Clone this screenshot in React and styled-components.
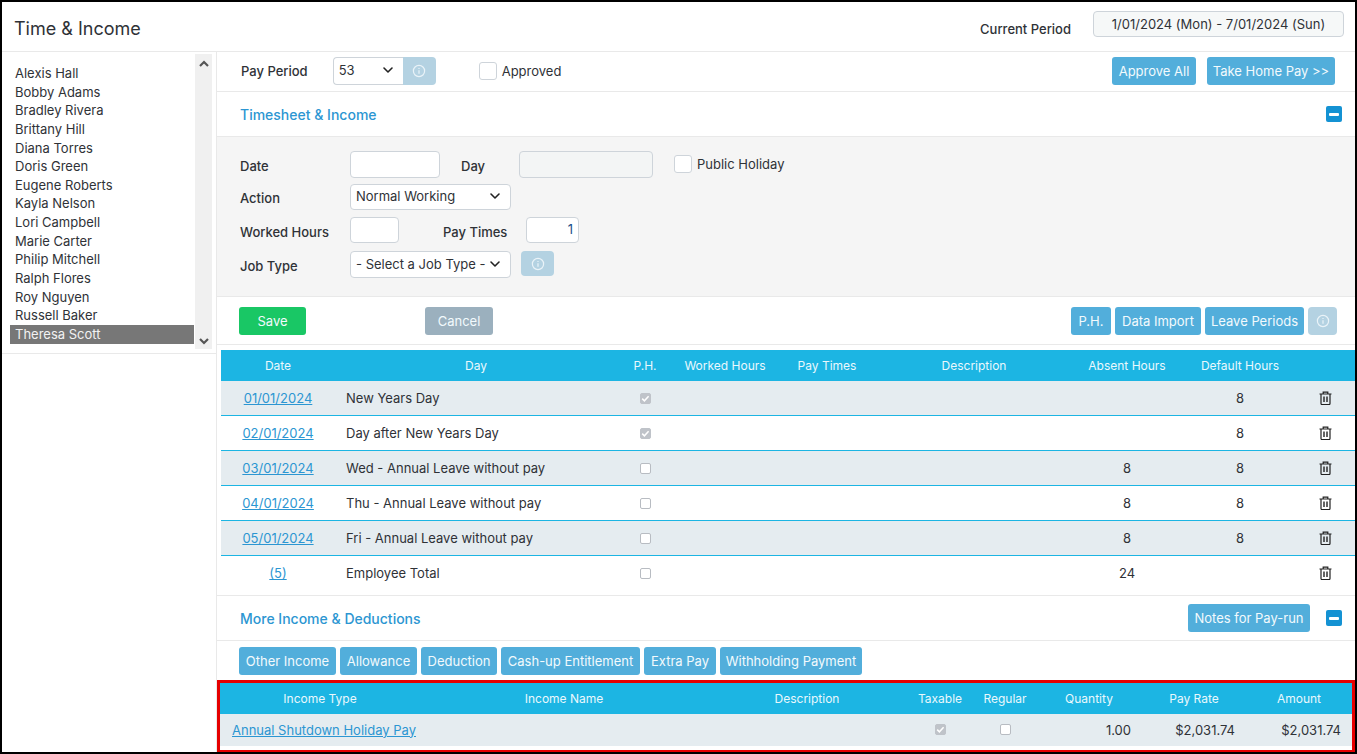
import React from 'react';
import styled, { createGlobalStyle } from 'styled-components';

const Global = createGlobalStyle`
  html, body { margin: 0; padding: 0; background: #000; }
  body { font-family: Inter, "Liberation Sans", sans-serif; font-size: 13px; color: #2f3237; }
  * { box-sizing: border-box; }
`;

const Page = styled.div`
  width: 1357px; height: 754px; overflow: hidden;
  background: #fff;
  border: 2px solid #000; border-bottom-width: 2px; border-right-width: 2px;
  display: flex; flex-direction: column;
`;
const TopBar = styled.header`
  height: 50px; flex: none; display: flex; align-items: center;
  border-bottom: 1px solid #e9e9e9;
  padding: 0 11px 0 12px;
`;
const Title = styled.h1`
  margin: 0; font-size: 18px; font-weight: 400; color: #2f3237; line-height: 22px; margin-top: 4px; flex: 1;
`;
const PeriodLabel = styled.span`
  font-size: 13px; font-weight: 500; margin-right: 22px; margin-top: 4px;
`;
const PeriodBox = styled.div`
  width: 251px; height: 26px; border: 1px solid #ced4da; border-radius: 4px;
  background: #f6f8f8; text-align: center; line-height: 24px; font-size: 13px;
  margin-top: -5px;
`;
const Body = styled.div`flex: 1; display: flex; min-height: 0;`;
const Sidebar = styled.aside`
  width: 215px; flex: none; border-right: 1px solid #e9e9e9;
`;
const ListWrap = styled.div`
  height: 302px; border-bottom: 1px solid #e9e9e9; padding: 2px 4px 0 8px; display: flex;
`;
const List = styled.ul`
  list-style: none; margin: 0; padding: 10px 0 0; width: 184px;
`;
const Person = styled.li`
  height: 18.65px; line-height: 18.65px; padding-left: 5px; font-size: 13px;
  background: ${p => (p.$on ? '#777' : 'transparent')};
  color: ${p => (p.$on ? '#f2f2f2' : '#2f3237')};
`;
const Scroll = styled.div`
  width: 17px; margin-left: 1px; background: #f0f0f0; display: flex; flex-direction: column;
  justify-content: space-between; align-items: center; padding: 5px 0 3px; height: 295px;
`;
const Main = styled.main`flex: 1; min-width: 0; display: flex; flex-direction: column;`;
const PayBar = styled.div`
  height: 40px; flex: none; display: flex; align-items: center;
  border-bottom: 1px solid #e9e9e9; padding: 0 20px 2px 24px;
`;
const Label = styled.span`font-size: 13px; font-weight: ${p => p.$w || 500};`;
const SelectGroup = styled.div`display: flex; margin-left: 25px;`;
const SelectBox = styled.div`
  width: ${p => p.$w}px; height: ${p => p.$h || 28}px; background: #fff; border: 1px solid #ced4da;
  border-radius: ${p => (p.$joined ? '4px 0 0 4px' : '4px')};
  display: flex; align-items: center; justify-content: space-between;
  padding: 0 9px 2px 5px; font-size: 13px; line-height: 16px;
  ${p => p.$joined && 'border-right: none;'}
`;
const InfoBtn = styled.div`
  width: ${p => p.$w || 33}px; height: ${p => p.$h || 28}px; background: #b4d2e2; display: flex; align-items: center; justify-content: center;
  border-radius: ${p => (p.$joined ? '0 4px 4px 0' : '4px')};
`;
const Check = styled.span`
  width: 18px; height: 18px; border: 1px solid #ced4da; border-radius: 3px; background: #fff; display: inline-block; flex: none;
`;
const ApprovedWrap = styled.div`display: flex; align-items: center; gap: 5px; margin-left: 43px; flex: 1; font-size: 13px;`;
const Btn = styled.button`
  height: 28px; border: none; border-radius: 3px; background: ${p => p.$bg || '#52aedb'}; color: ${p => p.$c || '#f2fafd'};
  font-family: inherit; font-size: 13px; padding: 0; width: ${p => p.$w}px; flex: none; line-height: 26px;
`;
const ButtonRow = styled.div`display: flex; gap: ${p => p.$gap || 4}px; align-items: center;`;
const SectionHead = styled.div`
  height: ${p => p.$h}px; flex: none; display: flex; align-items: center; justify-content: space-between;
  border-bottom: 1px solid #e9e9e9; padding: 0 13px 0 23px;
`;
const SectionTitle = styled.h2`margin: 0; font-size: 14px; font-weight: 500; color: #2c96d2;`;
const Collapse = styled.div`
  width: 16px; height: 16px; border-radius: 2px; background: #1492d3; display: flex; align-items: center; justify-content: center;
  &::after { content: ''; width: 10px; height: 3px; background: #fff; border-radius: 1px; }
`;
const Form = styled.div`
  height: 160px; flex: none; background: #f5f5f5; border-bottom: 1px solid #e9e9e9;
  padding: 14px 0 0 23px; display: flex; flex-direction: column;
`;
const FormRow = styled.div`display: flex; align-items: center; height: ${p => p.$h}px;`;
const FormLabel = styled.label`width: 110px; font-size: 13px; font-weight: ${p => p.$w || 500}; flex: none; padding-top: ${p => p.$t || 3}px;`;
const Input = styled.div`
  width: ${p => p.$w}px; height: ${p => p.$h || 27}px; flex: none; border: 1px solid #ced4da; border-radius: 4px;
  background: ${p => p.$off ? '#f3f5f5' : '#fff'}; text-align: right; padding: 0 5px 2px; color: #1a4f8a; font-size: 13px; line-height: 23px;
`;
const FormText = styled.span`font-size: 13px; font-weight: 500; margin: ${p => p.$m}; flex: none;`;
const PublicHoliday = styled.div`display: flex; align-items: center; gap: 5px; margin-left: 21px; margin-top: -1px; font-size: 13px;`;
const ActionBar = styled.div`
  height: 48px; flex: none; display: flex; align-items: center; border-bottom: 1px solid #e9e9e9;
  padding: 0 18px 0 22px; justify-content: space-between;
`;
const TableWrap = styled.div`padding: 5px 0 0 4px; flex: none;`;
const HeadRow = styled.div`
  display: grid; grid-template-columns: ${p => p.$cols}; height: 31px; align-items: center;
  background: #1cb5e3; color: #eaf8fd; font-size: 12px; text-align: center;
`;
const DataRow = styled.div`
  display: grid; grid-template-columns: ${p => p.$cols}; height: ${p => p.$h || 35}px; align-items: center;
  background: ${p => (p.$alt ? '#e5ecf0' : '#fff')};
  border-bottom: 1px solid ${p => p.$noline ? 'transparent' : '#1cb5e3'};
  font-size: 13px; text-align: center;
`;
const DateLink = styled.a`color: #2c96d2; text-decoration: underline; font-size: 13px;`;
const LeftCell = styled.span`text-align: left; padding-left: 11px;`;
const RightCell = styled.span`text-align: right; padding-right: 11px;`;
const BoxCell = styled.span`display: flex; justify-content: center; align-items: center;`;
const Mini = styled.span`
  width: 11px; height: 11px; border-radius: 2px; display: flex; align-items: center; justify-content: center;
  background: ${p => (p.$on ? '#bfc3c9' : '#fff')}; border: 1px solid ${p => (p.$on ? '#bfc3c9' : '#b8bcc2')};
`;
const MoreHead = styled(SectionHead)`border-top: 1px solid #e9e9e9; margin-top: 4px;`;
const NoteGroup = styled.div`display: flex; align-items: center; gap: 16px;`;
const MoreButtons = styled.div`height: 39px; flex: none; display: flex; align-items: center; gap: 4px; padding: 0 0 0 22px;`;
const RedFrame = styled.section`
  margin: 0 0 0 0; flex: none; height: 73px; border: 3px solid #e60000; padding: 0; overflow: hidden;
`;

const Chevron = ({ size = 12, up }) => (
  <svg width={size} height={size} viewBox="0 0 12 12" fill="none" stroke="#222" strokeWidth="1.6" strokeLinecap="round" strokeLinejoin="round">
    <path d={up ? 'M2 8l4-4 4 4' : 'M2 4l4 4 4-4'} />
  </svg>
);
const ScrollArrow = ({ up }) => (
  <svg width="12" height="10" viewBox="0 0 12 10" fill="none" stroke="#555" strokeWidth="2.2" strokeLinejoin="miter">
    <path d={up ? 'M2 7l4-4 4 4' : 'M2 3l4 4 4-4'} />
  </svg>
);
const Info = () => (
  <svg width="14" height="14" viewBox="0 0 14 14" fill="none" stroke="#eaf3f8" strokeWidth="1.2">
    <circle cx="7" cy="7" r="5.6" />
    <path d="M7 6.2v3.6M7 4v1" />
  </svg>
);
const Trash = () => (
  <svg width="13" height="14" viewBox="0 0 13 14" fill="none" stroke="#222" strokeWidth="1.2">
    <path d="M0.5 3h12M4.2 3V1.2h4.6V3M2 3v9.6a.9.9 0 0 0 .9.9h7.2a.9.9 0 0 0 .9-.9V3" />
    <path d="M5 5.5v5.5M8 5.5v5.5" strokeWidth="1.4" />
  </svg>
);
const Tick = () => (
  <svg width="9" height="9" viewBox="0 0 9 9" fill="none" stroke="#fff" strokeWidth="1.5"><path d="M1.2 4.6l2.2 2.2 4.2-4.6" /></svg>
);

const people = ['Alexis Hall','Bobby Adams','Bradley Rivera','Brittany Hill','Diana Torres','Doris Green','Eugene Roberts','Kayla Nelson','Lori Campbell','Marie Carter','Philip Mitchell','Ralph Flores','Roy Nguyen','Russell Baker','Theresa Scott'];
const cols1 = '114px 282px 56px 104px 100px 194px 112px 114px 56px';
const cols2 = '200px 288px 198px 68px 62px 106px 104px 1fr';
const rows = [
  ['01/01/2024','New Years Day',true,'','8'],
  ['02/01/2024','Day after New Years Day',true,'','8'],
  ['03/01/2024','Wed - Annual Leave without pay',false,'8','8'],
  ['04/01/2024','Thu - Annual Leave without pay',false,'8','8'],
  ['05/01/2024','Fri - Annual Leave without pay',false,'8','8'],
  ['(5)','Employee Total',false,'24',''],
];

export default function App() {
  return (
    <Page>
      <Global />
      <TopBar>
        <Title>Time &amp; Income</Title>
        <PeriodLabel>Current Period</PeriodLabel>
        <PeriodBox>1/01/2024 (Mon) - 7/01/2024 (Sun)</PeriodBox>
      </TopBar>
      <Body>
        <Sidebar>
          <ListWrap>
            <List>
              {people.map((n, i) => <Person key={n} $on={i === people.length - 1}>{n}</Person>)}
            </List>
            <Scroll><ScrollArrow up /><ScrollArrow /></Scroll>
          </ListWrap>
        </Sidebar>
        <Main>
          <PayBar>
            <Label>Pay Period</Label>
            <SelectGroup>
              <SelectBox $w={70} $joined>53<Chevron /></SelectBox>
              <InfoBtn $joined><Info /></InfoBtn>
            </SelectGroup>
            <ApprovedWrap><Check />Approved</ApprovedWrap>
            <ButtonRow $gap={11}>
              <Btn $w={84}>Approve All</Btn>
              <Btn $w={128}>Take Home Pay &gt;&gt;</Btn>
            </ButtonRow>
          </PayBar>
          <SectionHead $h={45}>
            <SectionTitle>Timesheet &amp; Income</SectionTitle>
            <Collapse />
          </SectionHead>
          <Form>
            <FormRow $h={27}>
              <FormLabel>Date</FormLabel>
              <Input $w={90} />
              <FormText $m="3px 0 0 21px" style={{ width: 58 }}>Day</FormText>
              <Input $w={134} $off />
              <PublicHoliday><Check />Public Holiday</PublicHoliday>
            </FormRow>
            <FormRow $h={26} style={{ marginTop: 6 }}>
              <FormLabel $t={2}>Action</FormLabel>
              <SelectBox $w={161} $h={26}>Normal Working<Chevron /></SelectBox>
            </FormRow>
            <FormRow $h={26} style={{ marginTop: 7 }}>
              <FormLabel>Worked Hours</FormLabel>
              <Input $w={49} $h={26} />
              <FormText $m="3px 0 0 44px" style={{ width: 83 }}>Pay Times</FormText>
              <Input $w={53} $h={26}>1</Input>
            </FormRow>
            <FormRow $h={27} style={{ marginTop: 8 }}>
              <FormLabel>Job Type</FormLabel>
              <SelectBox $w={161} $h={27}>- Select a Job Type -<Chevron /></SelectBox>
              <InfoBtn $w={33} $h={25} style={{ marginLeft: 10, marginTop: -2 }}><Info /></InfoBtn>
            </FormRow>
          </Form>
          <ActionBar>
            <ButtonRow $gap={119}>
              <Btn $w={67} $bg="#19c765">Save</Btn>
              <Btn $w={68} $bg="#9bb0be">Cancel</Btn>
            </ButtonRow>
            <ButtonRow>
              <Btn $w={40}>P.H.</Btn>
              <Btn $w={86}>Data Import</Btn>
              <Btn $w={99}>Leave Periods</Btn>
              <InfoBtn $w={29}><Info /></InfoBtn>
            </ButtonRow>
          </ActionBar>
          <TableWrap>
            <HeadRow $cols={cols1}>
              <span>Date</span><span>Day</span><span>P.H.</span><span>Worked Hours</span><span>Pay Times</span>
              <span>Description</span><span>Absent Hours</span><span>Default Hours</span><span />
            </HeadRow>
            {rows.map((r, i) => (
              <DataRow key={r[0]} $cols={cols1} $alt={i % 2 === 0} $noline={i === 5}>
                <span><DateLink>{r[0]}</DateLink></span>
                <LeftCell>{r[1]}</LeftCell>
                <BoxCell><Mini $on={r[2]}>{r[2] && <Tick />}</Mini></BoxCell>
                <span /><span /><span />
                <span>{r[3]}</span>
                <span>{r[4]}</span>
                <BoxCell><Trash /></BoxCell>
              </DataRow>
            ))}
          </TableWrap>
          <MoreHead $h={46}>
            <SectionTitle>More Income &amp; Deductions</SectionTitle>
            <NoteGroup>
              <Btn $w={122}>Notes for Pay-run</Btn>
              <Collapse />
            </NoteGroup>
          </MoreHead>
          <MoreButtons>
            <Btn $w={97}>Other Income</Btn>
            <Btn $w={77}>Allowance</Btn>
            <Btn $w={76}>Deduction</Btn>
            <Btn $w={139}>Cash-up Entitlement</Btn>
            <Btn $w={72}>Extra Pay</Btn>
            <Btn $w={142}>Withholding Payment</Btn>
          </MoreButtons>
          <RedFrame>
            <HeadRow $cols={cols2}>
              <span>Income Type</span><span>Income Name</span><span>Description</span><span>Taxable</span><span>Regular</span>
              <span>Quantity</span><span>Pay Rate</span><span>Amount</span>
            </HeadRow>
            <DataRow $cols={cols2} $alt $noline $h={32}>
              <LeftCell style={{ paddingLeft: 12 }}><DateLink>Annual Shutdown Holiday Pay</DateLink></LeftCell>
              <span /><span />
              <BoxCell><Mini $on><Tick /></Mini></BoxCell>
              <BoxCell><Mini /></BoxCell>
              <RightCell>1.00</RightCell>
              <RightCell>$2,031.74</RightCell>
              <RightCell>$2,031.74</RightCell>
            </DataRow>
          </RedFrame>
        </Main>
      </Body>
    </Page>
  );
}
